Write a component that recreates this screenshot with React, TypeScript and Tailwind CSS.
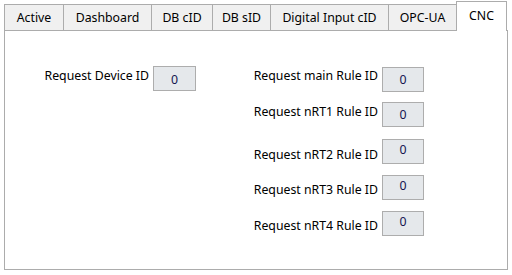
import type { FC } from 'react';

const tabs = [
  { name: 'Active', w: 'w-[59px]' },
  { name: 'Dashboard', w: 'w-[88px]' },
  { name: 'DB cID', w: 'w-[61px]' },
  { name: 'DB sID', w: 'w-[58px]' },
  { name: 'Digital Input cID', w: 'w-[118px]' },
  { name: 'OPC-UA', w: 'w-[68px]' },
];

const rules = [
  { label: 'Request main Rule ID', row: 'mt-0', lab: 'mt-[1px]', val: 'pt-[4px]' },
  { label: 'Request nRT1 Rule ID', row: 'mt-[10px]', lab: 'mt-[2px]', val: 'pt-[4px]' },
  { label: 'Request nRT2 Rule ID', row: 'mt-[12px]', lab: 'mt-[8px]', val: 'pt-[2px]' },
  { label: 'Request nRT3 Rule ID', row: 'mt-[11px]', lab: 'mt-[7px]', val: 'pt-[2px]' },
  { label: 'Request nRT4 Rule ID', row: 'mt-[11px]', lab: 'mt-[7px]', val: 'pt-[2px]' },
];

const ValueBox: FC<{ pad: string; w: string }> = ({ pad, w }) => (
  <div className={`${w} h-[25px] ml-[4px] border border-[#adadad] bg-[#e5e8eb] text-center text-[#141450] leading-[16px] ${pad}`}>
    0
  </div>
);

const App: FC = () => {
  return (
    <div className="w-[512px] h-[275px] bg-white font-['Noto_Sans',sans-serif] text-[12.3px] text-black pl-[4px] pt-[1px]">
      <div className="flex items-end h-[29px]">
        {tabs.map((t) => (
          <div
            key={t.name}
            className={`${t.w} h-[26px] border-t border-l border-[#acacac] bg-[#f0f0f0] flex items-center justify-center leading-[16px]`}
          >
            {t.name}
          </div>
        ))}
        <div className="w-[51px] h-[30px] -mb-px relative z-10 border-t border-l border-r border-[#acacac] bg-white flex justify-center pt-[6px] leading-[16px]">
          CNC
        </div>
      </div>
      <div className="w-[504px] h-[240px] border border-[#acacac] pl-[35px] pt-[35px] flex">
        <div className="flex items-start">
          <div className="w-[109px] text-right mt-[2px] leading-[16px] whitespace-nowrap">Request Device ID</div>
          <ValueBox pad="pt-[5px]" w="w-[43px]" />
        </div>
        <div className="ml-[44px] mt-[1px] flex flex-col">
          {rules.map((r) => (
            <div key={r.label} className={`flex items-start ${r.row}`}>
              <div className={`w-[138px] text-right leading-[16px] whitespace-nowrap ${r.lab}`}>{r.label}</div>
              <ValueBox pad={r.val} w="w-[42px]" />
            </div>
          ))}
        </div>
      </div>
    </div>
  );
};

export default App;
